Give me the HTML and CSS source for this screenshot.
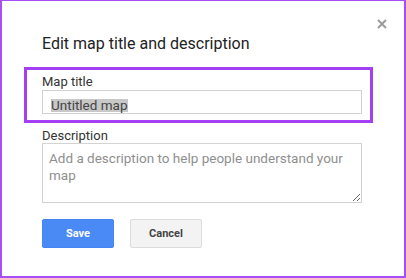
FILE: index.html
```html
<!DOCTYPE html>
<html>
<head>
	<meta charset="utf-8">
	<meta name="viewport" content="width=device-width, initial-scale=1">
	<link rel="stylesheet" href="styles.css">
</head>
<body>
<div class="dialog">
   <div class="close-row">
      <svg class="close" width="10" height="10" viewBox="0 0 10 10">
         <path d="M1 1L9 9M9 1L1 9" stroke="#9a9a9a" stroke-width="2" fill="none"/>
      </svg>
   </div>
   <h2 class="title">Edit map title and description</h2>
   <div class="field highlight">
      <label class="field-label">Map title</label>
      <div class="text-input"><span class="selected">Untitled map</span></div>
   </div>
   <label class="field-label desc-label" for="desc">Description</label>
   <textarea id="desc" placeholder="Add a description to help people understand your map"></textarea>
   <div class="buttons">
      <button class="btn save">Save</button>
      <button class="btn cancel">Cancel</button>
   </div>
</div>
</body>
</html>
```

FILE: styles.css
```css
body {
   margin: 0;
   background: #fff;
   font-family: Roboto, "Liberation Sans", sans-serif;
   color: #222;
}

.dialog {
   box-sizing: border-box;
   width: 406px;
   height: 278px;
   border: solid #a64ff5;
   border-width: 1px 2px 2px 2px;
   padding: 18px 17px 0 40px;
}

.close-row {
   display: flex;
   justify-content: flex-end;
   height: 10px;
}

.close {
   display: block;
}

.title {
   margin: 5px 0 0;
   font-size: 16px;
   font-weight: normal;
   line-height: 20px;
   color: #222;
}

.highlight {
   margin: 13px 14px 0 -18px;
   border: 3px solid #a43ff6;
   padding: 4px 8px 6px 15px;
}

.field-label {
   display: block;
   font-size: 13px;
   line-height: 16px;
   color: #333;
}

.text-input {
   box-sizing: border-box;
   width: 320px;
   height: 24px;
   border: 1px solid #d3d3d3;
   padding: 6px 0 0 8px;
   font-size: 13.5px;
}

.selected {
   display: inline-block;
   height: 13px;
   line-height: 13px;
   background: #c8c8c8;
   color: #444;
}

.desc-label {
   margin-top: 5px;
   line-height: 15px;
}

textarea {
   display: block;
   box-sizing: border-box;
   width: 320px;
   height: 60px;
   margin: 0;
   border: 1px solid #d3d3d3;
   border-radius: 0;
   padding: 6px 6px;
   font-family: Roboto, "Liberation Sans", sans-serif;
   font-size: 13.5px;
   line-height: 17px;
   resize: vertical;
   outline: none;
}

textarea::placeholder {
   color: #8f8f8f;
}

.buttons {
   display: flex;
   gap: 16px;
   margin-top: 16px;
}

.btn {
   box-sizing: border-box;
   width: 72px;
   height: 29px;
   border-radius: 2px;
   font-family: Roboto, "Liberation Sans", sans-serif;
   font-size: 11px;
   font-weight: bold;
   cursor: pointer;
}

.save {
   background: #4a8af4;
   border: 1px solid #4285f4;
   color: #fff;
}

.cancel {
   background: #f3f3f3;
   border: 1px solid #dcdcdc;
   color: #444;
}
```
